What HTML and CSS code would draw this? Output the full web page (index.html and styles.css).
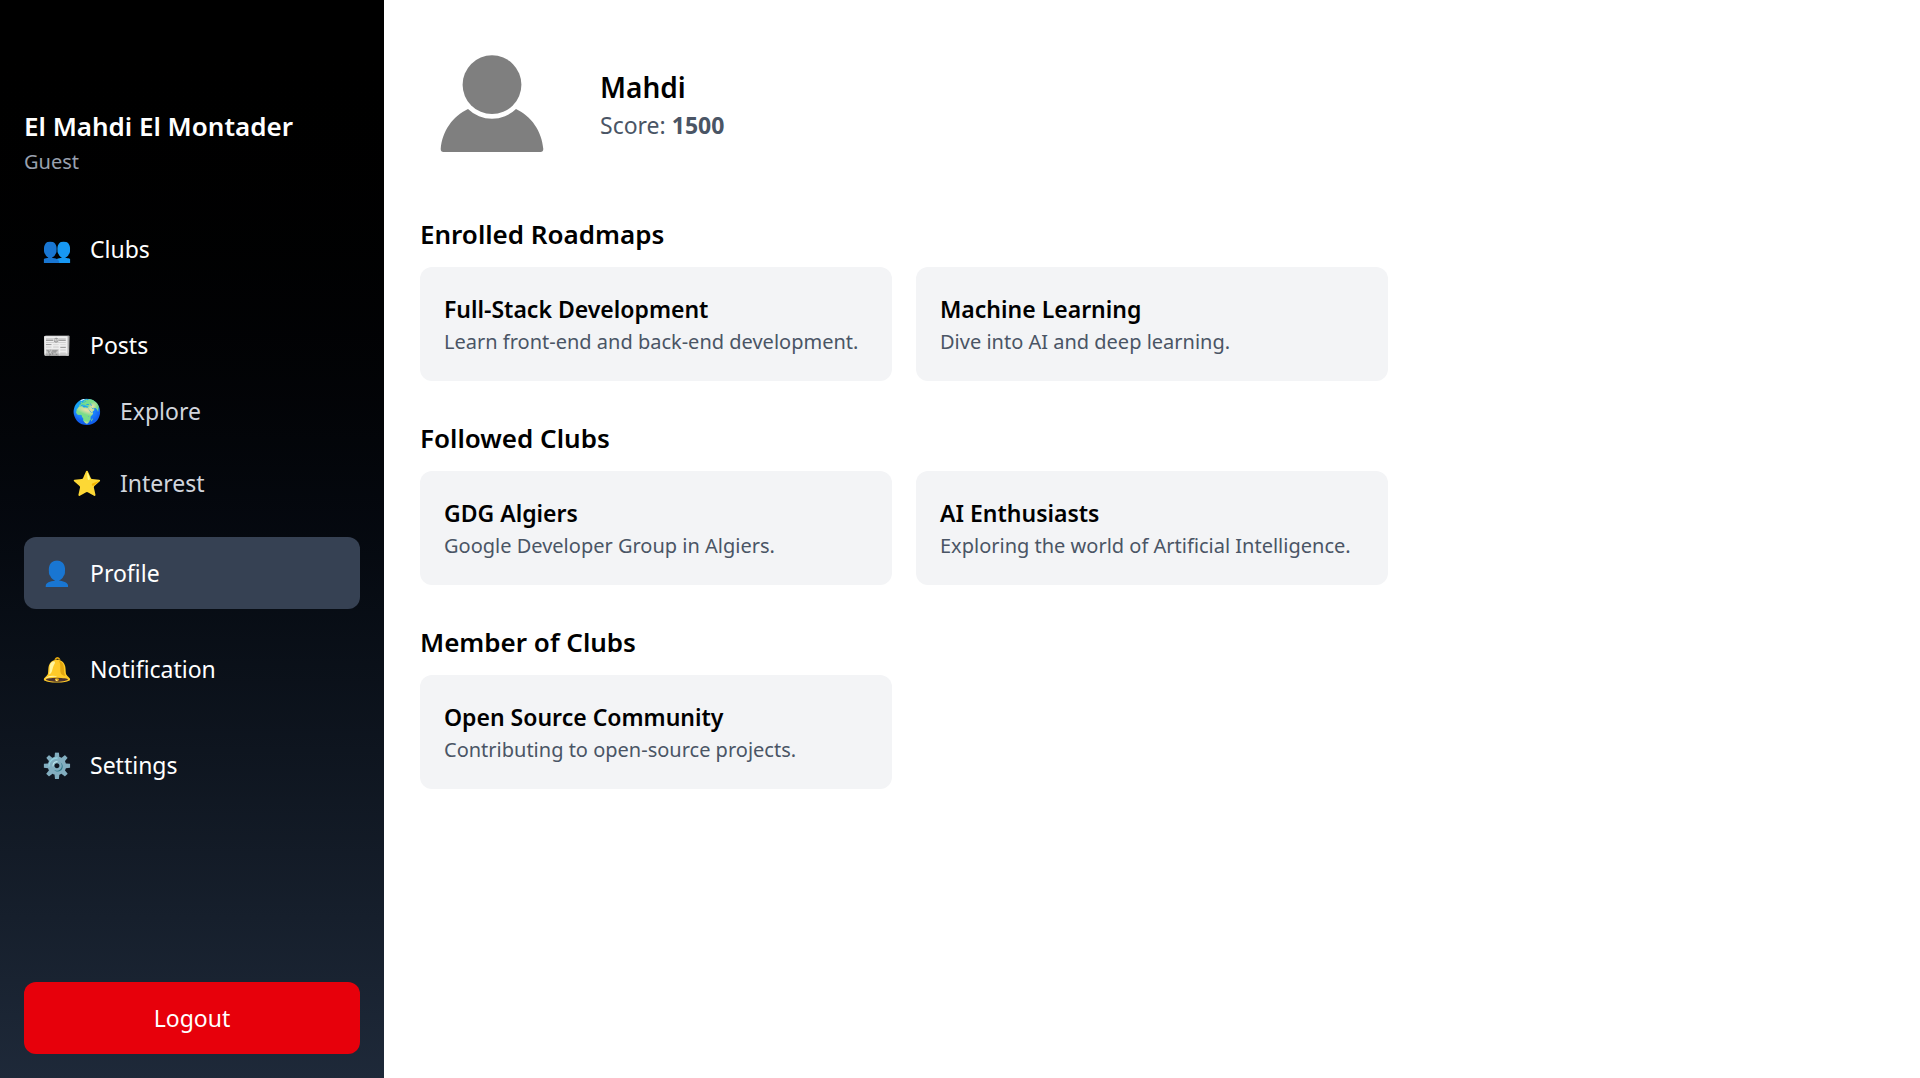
FILE: index.html
```html
<!DOCTYPE html>
<html lang="en">
<head>
<meta charset="utf-8">
<title>Profile</title>
<link rel="stylesheet" href="styles.css">
</head>
<body>
<div class="layout">
  <aside class="sidebar">
    <header class="user">
      <h2 class="user-name">El Mahdi El Montader</h2>
      <p class="user-role">Guest</p>
    </header>
    <nav class="menu">
      <a class="item" href="#clubs"><span class="icon">👥</span>Clubs</a>
      <div>
        <a class="item" href="#posts"><span class="icon">📰</span>Posts</a>
        <div class="submenu">
          <a class="subitem" href="#explore"><span class="icon">🌍</span>Explore</a>
          <a class="subitem" href="#interest"><span class="icon">⭐</span>Interest</a>
        </div>
      </div>
      <a class="item active" href="#profile"><span class="icon">👤</span>Profile</a>
      <a class="item" href="#notification"><span class="icon">🔔</span>Notification</a>
      <a class="item" href="#settings"><span class="icon">⚙️</span>Settings</a>
    </nav>
    <button class="logout" type="button">Logout</button>
  </aside>
  <main class="content">
    <header class="profile">
      <svg class="avatar" viewBox="0 0 144 144" role="img" aria-label="Avatar">
        <circle cx="72" cy="51.7" r="29.4" fill="#7f7f7f"/>
        <path d="M48 76A34.3 34.3 0 0 0 96 76C111 83 122 98 123.300 116Q123.300 119 120.500 119H23.500Q20.700 119 20.700 116C22 98 33 83 48 76Z" fill="#7f7f7f"/>
      </svg>
      <div>
        <h1 class="profile-name">Mahdi</h1>
        <p class="score">Score: <strong>1500</strong></p>
      </div>
    </header>
    <section class="group">
      <h2 class="group-title">Enrolled Roadmaps</h2>
      <div class="cards">
        <article class="card"><h3 class="card-title">Full-Stack Development</h3><p class="card-text">Learn front-end and back-end development.</p></article>
        <article class="card"><h3 class="card-title">Machine Learning</h3><p class="card-text">Dive into AI and deep learning.</p></article>
      </div>
    </section>
    <section class="group">
      <h2 class="group-title">Followed Clubs</h2>
      <div class="cards">
        <article class="card"><h3 class="card-title">GDG Algiers</h3><p class="card-text">Google Developer Group in Algiers.</p></article>
        <article class="card"><h3 class="card-title">AI Enthusiasts</h3><p class="card-text">Exploring the world of Artificial Intelligence.</p></article>
      </div>
    </section>
    <section class="group">
      <h2 class="group-title">Member of Clubs</h2>
      <div class="cards">
        <article class="card"><h3 class="card-title">Open Source Community</h3><p class="card-text">Contributing to open-source projects.</p></article>
      </div>
    </section>
  </main>
</div>
</body>
</html>
```
FILE: styles.css
```css
* { box-sizing: border-box; margin: 0; padding: 0; }
body { font-family: "Noto Sans", "Open Sans", sans-serif; font-size: 23px; line-height: 36px; color: #000; background: #fff; }
.layout { display: flex; min-height: 100vh; }
.sidebar { width: 384px; flex-shrink: 0; display: flex; flex-direction: column; padding: 24px; color: #fff; background: linear-gradient(in oklab, #000, #1e2939); }
.user { padding: 84px 0 0; }
.user-name { font-size: 26px; font-weight: 600; line-height: 36px; }
.user-role { font-size: 20px; line-height: 36px; color: #99a1af; }
.menu { display: flex; flex-direction: column; gap: 24px; margin-top: 33px; }
.item, .subitem { display: flex; align-items: center; gap: 18px; padding: 18px; border-radius: 12px; color: inherit; text-decoration: none; }
.icon { width: 30px; font-size: 24px; white-space: nowrap; }
.submenu { display: flex; flex-direction: column; gap: 12px; margin-left: 36px; }
.subitem { padding: 12px; color: #d1d5dc; }
.active { background: #364153; }
.logout { margin-top: auto; padding: 18px; border: 0; border-radius: 12px; font: inherit; color: #fff; background: #e7000b; }
.content { flex: 1; padding: 33px 36px; }
.profile { display: flex; align-items: center; gap: 36px; }
.avatar { width: 144px; height: 144px; }
.profile-name { font-size: 28px; font-weight: 600; line-height: 40px; }
.score { color: #4a5565; }
.group { max-width: 968px; margin-top: 39px; }
.group-title { font-size: 26px; font-weight: 600; line-height: 36px; margin-bottom: 15px; }
.cards { display: grid; grid-template-columns: 1fr 1fr; gap: 24px; }
.card { padding: 24px; border-radius: 12px; background: #f3f4f6; }
.card-title { font-size: 23px; font-weight: 600; line-height: 36px; }
.card-text { font-size: 20px; line-height: 30px; color: #4a5565; }
```
